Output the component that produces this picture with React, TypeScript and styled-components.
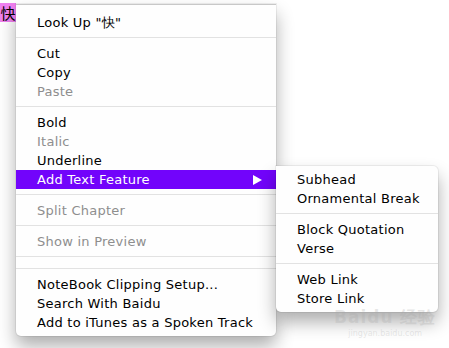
import React from "react";
import styled, { createGlobalStyle } from "styled-components";

const GlobalStyle = createGlobalStyle`
  html, body {
    margin: 0;
    padding: 0;
    background: #ffffff;
  }
`;

const Page = styled.div`
  position: relative;
  width: 449px;
  height: 348px;
  overflow: hidden;
  background: #ffffff;
  padding-top: 3px;
  box-sizing: border-box;
  font-family: "DejaVu Sans", "Liberation Sans", sans-serif;
  font-size: 13px;
  letter-spacing: 0.25px;
  color: #000;
`;

const TextLine = styled.div`
  display: flex;
  align-items: flex-start;
`;

const Selected = styled.span`
  width: 16px;
  height: 19px;
  background: #ef80ef;
  font-family: "Noto Sans CJK SC", sans-serif;
  font-size: 15px;
  line-height: 19px;
  letter-spacing: 0;
  text-align: center;
`;

const Caret = styled.span`
  width: 6px;
  height: 3px;
  margin: 1px 0 0 3px;
  background: #9a9a9a;
`;

const Menu = styled.div<{ $left: number; $top: number; $width: number }>`
  position: absolute;
  left: ${(p) => p.$left}px;
  top: ${(p) => p.$top}px;
  width: ${(p) => p.$width}px;
  background: #fefefe;
  border-radius: 0 0 5px 5px;
  box-shadow: 0 10px 18px rgba(0, 0, 0, 0.32), 0 0 0 1px rgba(0, 0, 0, 0.06);
  display: flex;
  flex-direction: column;
`;

const MainMenu = styled(Menu)`
  padding: 8px 0 4px;
  border-top: 1px solid #c8c8c8;
`;

const SubMenu = styled(Menu)`
  padding: 4px 0;
  border-radius: 0 5px 5px 5px;
`;

const Item = styled.div<{ $disabled?: boolean; $active?: boolean }>`
  height: 19px;
  line-height: 19px;
  padding: 0 14px 0 21px;
  display: flex;
  justify-content: space-between;
  align-items: center;
  white-space: nowrap;
  color: ${(p) => (p.$active ? "#fff" : p.$disabled ? "#8e8e8e" : "#000")};
  background: ${(p) => (p.$active ? "#7204fb" : "transparent")};
`;

const Separator = styled.div`
  height: 1px;
  margin: 5px 0 6px;
  background: #e2e2e2;
`;

const Watermark = styled.div`
  position: absolute;
  left: 334px;
  top: 309px;
  color: rgba(170, 170, 170, 0.28);
  font-family: "DejaVu Sans", sans-serif;
  letter-spacing: 0;
  text-align: center;
  line-height: 1;
`;

const WmBig = styled.div`
  font-size: 17px;
  font-weight: bold;
  letter-spacing: 1px;
`;

const WmSmall = styled.div`
  font-size: 8px;
  margin-top: 4px;
`;

const Arrow = () => (
  <svg width="9" height="10" viewBox="0 0 9 10">
    <polygon points="0,0 9,5 0,10" fill="#fff" />
  </svg>
);

type Entry = { label?: string; disabled?: boolean; active?: boolean; sub?: boolean } | "sep";

const mainItems: Entry[] = [
  { label: 'Look Up "快"' },
  "sep",
  { label: "Cut" },
  { label: "Copy" },
  { label: "Paste", disabled: true },
  "sep",
  { label: "Bold" },
  { label: "Italic", disabled: true },
  { label: "Underline" },
  { label: "Add Text Feature", active: true, sub: true },
  "sep",
  { label: "Split Chapter", disabled: true },
  "sep",
  { label: "Show in Preview", disabled: true },
  "sep",
  "sep",
  { label: "NoteBook Clipping Setup..." },
  { label: "Search With Baidu" },
  { label: "Add to iTunes as a Spoken Track" },
];

const subItems: Entry[] = [
  { label: "Subhead" },
  { label: "Ornamental Break" },
  "sep",
  { label: "Block Quotation" },
  { label: "Verse" },
  "sep",
  { label: "Web Link" },
  { label: "Store Link" },
];

const renderItems = (items: Entry[]) =>
  items.map((it, i) =>
    it === "sep" ? (
      <Separator key={i} />
    ) : (
      <Item key={i} $disabled={it.disabled} $active={it.active}>
        <span>{it.label}</span>
        {it.sub && <Arrow />}
      </Item>
    )
  );

export default function App() {
  return (
    <Page>
      <GlobalStyle />
      <TextLine>
        <Selected>快</Selected>
        <Caret />
      </TextLine>
      <MainMenu $left={16} $top={4} $width={260}>
        {renderItems(mainItems)}
      </MainMenu>
      <SubMenu $left={276} $top={166} $width={162}>
        {renderItems(subItems)}
      </SubMenu>
      <Watermark>
        <WmBig>Baidu 经验</WmBig>
        <WmSmall>jingyan.baidu.com</WmSmall>
      </Watermark>
    </Page>
  );
}
